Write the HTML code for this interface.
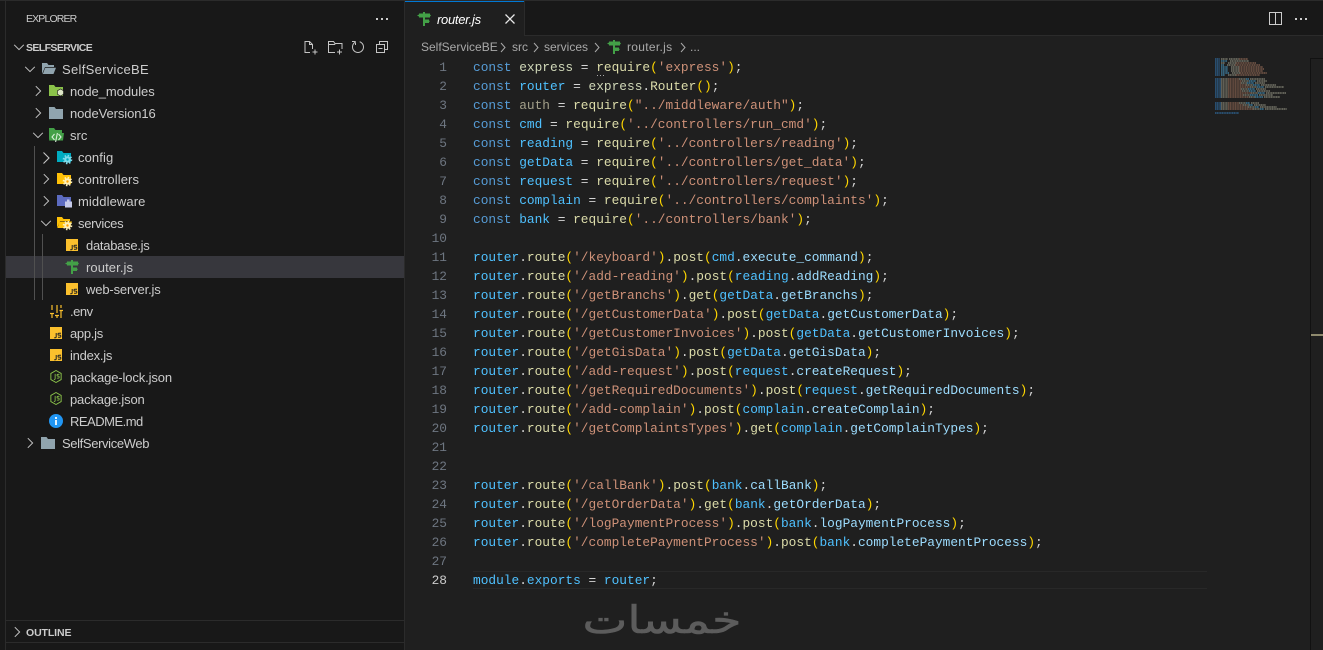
<!DOCTYPE html>
<html lang="en"><head><meta charset="utf-8"><title>router.js</title>
<style>
html,body{margin:0;padding:0;width:1323px;height:650px;overflow:hidden;background:#1f1f1f}
body{position:relative;font-family:"Liberation Sans",sans-serif;color:#ccc;font-size:13px}
.abs,.row,.sv{position:absolute}
#side{position:absolute;left:0;top:0;width:405px;height:650px;background:#181818}
.row{height:22px;line-height:22px;white-space:nowrap;left:0}
.row b{font-size:10.5px}
.row svg,.sv{position:absolute}
.code{position:absolute;left:473px;top:58px;font-family:"Liberation Mono",monospace;font-size:12.83px;line-height:19px;white-space:pre;color:#d4d4d4}
.nums{position:absolute;left:420px;width:27px;top:58px;font-family:"Liberation Mono",monospace;font-size:12.83px;line-height:19px;text-align:right;color:#6e7681}
.k{color:#569cd6}.v{color:#4fc1ff}.f{color:#dcdcaa}.s{color:#ce9178}.b{color:#ffd700}.a{color:#9cdcfe}.d{color:#a3a08a}.e{color:#d0d8b8}
.t{position:absolute;top:1px;line-height:22px}
.bc .t{top:0}
</style></head><body>
<svg width="0" height="0" style="position:absolute">
<defs>
<symbol id="chevR" viewBox="0 0 16 16"><path d="M5.5 2.5L11 8l-5.500 5.500" fill="none" stroke="#c5c5c5" stroke-width="1.100"/></symbol>
<symbol id="chevD" viewBox="0 0 16 16"><path d="M2.500 5.500L8 11l5.500-5.500" fill="none" stroke="#c5c5c5" stroke-width="1.100"/></symbol>
<symbol id="sign" viewBox="0 0 14 14"><path d="M6 0h2v1.500h5v1l1 1-1 1v1H8v2h4v1l1 .8-1 .7v1H8v3h2v1H4v-1h2V5.500H2v-1L0 3.500l2-1v-1h4z" fill="#43a047"/></symbol>
<symbol id="js" viewBox="0 0 12 12"><rect width="12" height="12" fill="#fbc02d"/><path d="M6.200 6v3.800q0 1-1 1H4.200M11 6.300H8.800q-.8 0-.8.900t.8.900h1.200q.8 0 .8 1.100t-.8 1H8" fill="none" stroke="#222" stroke-width="1"/></symbol>
<symbol id="fold" viewBox="0 0 16 14"><path d="M1 1h5.500l1.500 2h7v10H1z" fill="#90a4ae"/></symbol>
<symbol id="nodej" viewBox="0 0 14 16"><path d="M7 1l6 3.400v7.200L7 15l-6-3.400V4.400z" fill="none" stroke="#8bc34a" stroke-width="1.100"/><path d="M6 5v5.500q0 1-1.500 1M11 5.500H9.200q-1 0-1 1t1 1h.5q1 0 1 1.200t-1 1.200H8" fill="none" stroke="#8bc34a" stroke-width="1"/></symbol>
</defs></svg>

<div id="side">
<div class="abs" style="left:0;top:0;width:1323px;height:1px;background:#2b2b2b"></div>
<div class="abs" style="left:5px;top:0;width:1px;height:650px;background:#2b2b2b"></div>
<div class="abs" style="left:404px;top:0;width:1px;height:650px;background:#2b2b2b"></div>
<div class="abs" style="left:26px;top:8px;line-height:22px;font-size:10.5px;letter-spacing:-.85px;color:#ccc">EXPLORER</div>
<svg class="sv" style="left:375px;top:18px" width="14" height="3"><path d="M1 0h2v2H1zM6 0h2v2H6zM11 0h2v2h-2z" fill="#ccc"/></svg>

<div class="abs" style="left:6px;top:256px;width:398px;height:22px;background:#37373d"></div>
<div class="abs" style="left:34px;top:146px;width:1px;height:154px;background:#505050"></div>
<div class="abs" style="left:42px;top:234px;width:1px;height:66px;background:#505050"></div>

<div class="row" style="top:36px"><svg style="left:11px;top:4px" width="16" height="14"><use href="#chevD"/></svg><b class="t" style="left:26px;letter-spacing:-.6px">SELFSERVICE</b></div>
<svg class="sv" style="left:303px;top:40px" width="16" height="15" fill="none" stroke="#c5c5c5"><path d="M9.500 9V4.500L6.500 1.500H2v11h5M6.500 1.500v3h3M12 9.500v5M9.500 12h5"/></svg>
<svg class="sv" style="left:327px;top:40px" width="16" height="15" fill="none" stroke="#c5c5c5"><path d="M8 12.500H1.500v-11h5l1.500 2h7V9M1.500 4.500h6l1-1M12.500 9.500v5M10 12h5"/></svg>
<svg class="sv" style="left:350px;top:39px" width="16" height="16" viewBox="0 0 16 16"><path fill="#c5c5c5" d="M5.563 2.516C3.463 3.450 2 5.554 2 8c0 3.314 2.686 6 6 6s6-2.686 6-6c0-2.675-1.750-4.941-4.168-5.715l-.302.953C11.543 3.885 13 5.772 13 8c0 2.761-2.239 5-5 5s-5-2.239-5-5c0-1.689.837-3.182 2.120-4.088zM5 3H2V2h3.500l.5.500V6H5z"/></svg>
<svg class="sv" style="left:375px;top:40px" width="14" height="15" fill="none" stroke="#c5c5c5"><path d="M4.500 4V1.500h8v8H10M1.500 4.500h8v8h-8zM3.500 8.500h4"/></svg>

<div class="row" style="top:58px"><svg style="left:22px;top:4px" width="16" height="14"><use href="#chevD"/></svg>
<svg style="left:41px;top:4px" width="15" height="13"><path d="M1 1h5l1.500 2H13v2H4L1 12z" fill="#90a4ae"/><path d="M4.200 5.800H15L12.500 12H1.800z" fill="#90a4ae"/></svg>
<span class="t" style="left:62px;letter-spacing:.3px">SelfServiceBE</span></div>

<div class="row" style="top:80px"><svg style="left:30px;top:4px" width="16" height="14"><use href="#chevR"/></svg>
<svg style="left:49px;top:4px" width="15" height="14"><path d="M0 1h5l1.500 2H14v9H0z" fill="#8bc34a"/><path d="M11.500 5l3 1.700v3.600l-3 1.700-3-1.700V6.700z" fill="#dfe8c8" stroke="#181818" stroke-width=".6"/></svg>
<span class="t" style="left:70px;letter-spacing:-.05px">node_modules</span></div>

<div class="row" style="top:102px"><svg style="left:30px;top:4px" width="16" height="14"><use href="#chevR"/></svg>
<svg style="left:48px;top:4px" width="16" height="14"><use href="#fold"/></svg>
<span class="t" style="left:70px;letter-spacing:-.08px">nodeVersion16</span></div>

<div class="row" style="top:124px"><svg style="left:30px;top:4px" width="16" height="14"><use href="#chevD"/></svg>
<svg style="left:49px;top:4px" width="15" height="14"><path d="M0 0h5l1.500 2H13v3H3L0 12z" fill="#43a047"/><path d="M2 5h13l-1 7.500H0z" fill="#43a047"/><path d="M5.500 6L3 9l2.500 3M9.500 6l2.500 3-2.500 3M8.400 5l-1.800 9" fill="none" stroke="#d8f0d8" stroke-width="1.100"/></svg>
<span class="t" style="left:70px">src</span></div>

<div class="row" style="top:146px"><svg style="left:38px;top:4px" width="16" height="16" ><use href="#chevR"/></svg>
<svg style="left:57px;top:4px" width="16" height="15"><path d="M0 1h5l1.500 2H14v9H0z" fill="#00acc1"/><circle cx="10.500" cy="9.500" r="3.300" fill="#7fdcec"/><circle cx="10.500" cy="9.500" r="4" fill="none" stroke="#7fdcec" stroke-width="1.600" stroke-dasharray="1.500 1.640"/><circle cx="10.500" cy="9.500" r="1.200" fill="#00acc1"/></svg>
<span class="t" style="left:78px;letter-spacing:.1px">config</span></div>

<div class="row" style="top:168px"><svg style="left:38px;top:4px" width="16" height="14"><use href="#chevR"/></svg>
<svg style="left:57px;top:4px" width="16" height="15"><path d="M0 1h5l1.500 2H14v9H0z" fill="#ffc107"/><circle cx="10.500" cy="9.500" r="3.300" fill="#fff1b8"/><circle cx="10.500" cy="9.500" r="4" fill="none" stroke="#fff1b8" stroke-width="1.600" stroke-dasharray="1.500 1.640"/><circle cx="10.500" cy="9.500" r="1.200" fill="#ffa000"/></svg>
<span class="t" style="left:78px;letter-spacing:.1px">controllers</span></div>

<div class="row" style="top:190px"><svg style="left:38px;top:4px" width="16" height="14"><use href="#chevR"/></svg>
<svg style="left:57px;top:4px" width="16" height="15"><path d="M0 1h5l1.500 2H14v9H0z" fill="#5c6bc0"/><path d="M8 7.500h2V5.500h2.500v2H15v6H8z" fill="#c5cae9"/></svg>
<span class="t" style="left:78px;letter-spacing:.1px">middleware</span></div>

<div class="row" style="top:212px"><svg style="left:38px;top:4px" width="16" height="14"><use href="#chevD"/></svg>
<svg style="left:57px;top:4px" width="16" height="15"><path d="M0 1h5l1.500 2H13v2H3L0 12z" fill="#ffc107"/><path d="M2.500 5.500H15l-2 6.500H.5z" fill="#ffc107"/><circle cx="10.500" cy="9.500" r="3.300" fill="#fff1b8"/><circle cx="10.500" cy="9.500" r="4" fill="none" stroke="#fff1b8" stroke-width="1.600" stroke-dasharray="1.500 1.640"/><circle cx="10.500" cy="9.500" r="1.200" fill="#ffa000"/></svg>
<span class="t" style="left:78px;letter-spacing:-.3px">services</span></div>

<div class="row" style="top:234px"><svg style="left:66px;top:5px" width="12" height="12"><use href="#js"/></svg><span class="t" style="left:86px;letter-spacing:-.27px">database.js</span></div>
<div class="row" style="top:256px"><svg style="left:65px;top:4px" width="14" height="14"><use href="#sign"/></svg><span class="t" style="left:86px;letter-spacing:.1px">router.js</span></div>
<div class="row" style="top:278px"><svg style="left:66px;top:5px" width="12" height="12"><use href="#js"/></svg><span class="t" style="left:86px;letter-spacing:-.15px">web-server.js</span></div>

<div class="row" style="top:300px"><svg style="left:49px;top:4px" width="14" height="14" fill="none" stroke="#fbc02d" stroke-width="1.200"><path d="M3 1v5M1 9.500h4M3 9.500V14M8 1v8M6 11.500h4M8 11.500V14M12 1v3M10.500 6.500H14M12 6.500V14"/></svg><span class="t" style="left:70px;letter-spacing:-.5px">.env</span></div>
<div class="row" style="top:322px"><svg style="left:50px;top:5px" width="12" height="12"><use href="#js"/></svg><span class="t" style="left:70px;letter-spacing:-.3px">app.js</span></div>
<div class="row" style="top:344px"><svg style="left:50px;top:5px" width="12" height="12"><use href="#js"/></svg><span class="t" style="left:70px;letter-spacing:-.25px">index.js</span></div>
<div class="row" style="top:366px"><svg style="left:50px;top:3px" width="12" height="15" viewBox="0 0 14 16"><use href="#nodej"/></svg><span class="t" style="left:70px;letter-spacing:-.12px">package-lock.json</span></div>
<div class="row" style="top:388px"><svg style="left:50px;top:3px" width="12" height="15" viewBox="0 0 14 16"><use href="#nodej"/></svg><span class="t" style="left:70px;letter-spacing:-.17px">package.json</span></div>
<div class="row" style="top:410px"><svg style="left:49px;top:4px" width="14" height="14"><circle cx="7" cy="7" r="7" fill="#2196f3"/><path d="M6 3h2v2H6zM6 6h2v5H6z" fill="#e3f2fd"/></svg><span class="t" style="left:70px;letter-spacing:-.5px">README.md</span></div>
<div class="row" style="top:432px"><svg style="left:22px;top:4px" width="16" height="14"><use href="#chevR"/></svg>
<svg style="left:40px;top:4px" width="16" height="14"><use href="#fold"/></svg>
<span class="t" style="left:62px;letter-spacing:-.37px">SelfServiceWeb</span></div>

<div class="abs" style="left:6px;top:620px;width:398px;height:1px;background:#2b2b2b"></div>
<div class="abs" style="left:6px;top:642px;width:398px;height:1px;background:#2b2b2b"></div>
<div class="row" style="top:621px"><svg style="left:9px;top:4px" width="16" height="14"><use href="#chevR"/></svg><b class="t" style="left:26px;letter-spacing:-.1px">OUTLINE</b></div>
</div>

<!-- tabs -->
<div class="abs" style="left:405px;top:1px;width:918px;height:34px;background:#181818"></div>
<div class="abs" style="left:405px;top:35px;width:918px;height:1px;background:#2b2b2b"></div>
<div class="abs" style="left:405px;top:1px;width:119px;height:35px;background:#1f1f1f;border-right:1px solid #2b2b2b;box-sizing:content-box"></div>
<div class="abs" style="left:405px;top:1px;width:119px;height:1px;background:#0078d4"></div>
<svg class="sv" style="left:417px;top:12px" width="14" height="14"><use href="#sign"/></svg>
<div class="abs" style="left:437px;top:9px;line-height:22px;font-style:italic;font-size:13px;letter-spacing:-.3px;color:#fff">router.js</div>
<svg class="sv" style="left:504px;top:13px" width="12" height="12"><path d="M1.500 1.500l9 9M10.500 1.500l-9 9" stroke="#e8e8e8" stroke-width="1.300"/></svg>
<svg class="sv" style="left:1269px;top:12px" width="13" height="13" fill="none" stroke="#ccc"><path d="M.5 .5h12v12H.5zM6.500 .5v12"/></svg>
<svg class="sv" style="left:1294px;top:18px" width="14" height="3"><path d="M1 0h2v2H1zM6 0h2v2H6zM11 0h2v2h-2z" fill="#ccc"/></svg>

<!-- breadcrumb -->
<div class="abs bc" style="left:421px;top:36px;height:22px;line-height:22px;font-size:12px;color:#a9a9a9;white-space:nowrap">
<span class="t" style="left:0">SelfServiceBE</span>
<svg class="sv" style="left:78px;top:6px" width="10" height="11"><path d="M2 1l4 4.500L2 10" fill="none" stroke="#a9a9a9"/></svg>
<span class="t" style="left:91px">src</span>
<svg class="sv" style="left:111px;top:6px" width="10" height="11"><path d="M2 1l4 4.500L2 10" fill="none" stroke="#a9a9a9"/></svg>
<span class="t" style="left:123px">services</span>
<svg class="sv" style="left:172px;top:6px" width="10" height="11"><path d="M2 1l4 4.500L2 10" fill="none" stroke="#a9a9a9"/></svg>
<svg class="sv" style="left:186px;top:4px" width="14" height="14"><use href="#sign"/></svg>
<span class="t" style="left:206px;letter-spacing:.3px">router.js</span>
<svg class="sv" style="left:258px;top:6px" width="10" height="11"><path d="M2 1l4 4.500L2 10" fill="none" stroke="#a9a9a9"/></svg>
<span class="t" style="left:269px">...</span>
</div>

<!-- editor -->
<div class="abs" style="left:473px;top:571px;width:734px;height:16px;border-top:1px solid #282828;border-bottom:1px solid #282828"></div>
<div class="nums">1<br>2<br>3<br>4<br>5<br>6<br>7<br>8<br>9<br>10<br>11<br>12<br>13<br>14<br>15<br>16<br>17<br>18<br>19<br>20<br>21<br>22<br>23<br>24<br>25<br>26<br>27<br><span style="color:#ccc">28</span></div>
<div class="code"><span class="k">const</span> <span class="e">express</span> = <span class="f">require</span><span class="b">(</span><span class="s">'express'</span><span class="b">)</span>;
<span class="k">const</span> <span class="v">router</span> = <span class="e">express</span>.<span class="f">Router</span><span class="b">()</span>;
<span class="k">const</span> <span class="d">auth</span> = <span class="f">require</span><span class="b">(</span><span class="s">"../middleware/auth"</span><span class="b">)</span>;
<span class="k">const</span> <span class="v">cmd</span> = <span class="f">require</span><span class="b">(</span><span class="s">'../controllers/run_cmd'</span><span class="b">)</span>;
<span class="k">const</span> <span class="v">reading</span> = <span class="f">require</span><span class="b">(</span><span class="s">'../controllers/reading'</span><span class="b">)</span>;
<span class="k">const</span> <span class="v">getData</span> = <span class="f">require</span><span class="b">(</span><span class="s">'../controllers/get_data'</span><span class="b">)</span>;
<span class="k">const</span> <span class="v">request</span> = <span class="f">require</span><span class="b">(</span><span class="s">'../controllers/request'</span><span class="b">)</span>;
<span class="k">const</span> <span class="v">complain</span> = <span class="f">require</span><span class="b">(</span><span class="s">'../controllers/complaints'</span><span class="b">)</span>;
<span class="k">const</span> <span class="v">bank</span> = <span class="f">require</span><span class="b">(</span><span class="s">'../controllers/bank'</span><span class="b">)</span>;

<span class="v">router</span>.<span class="f">route</span><span class="b">(</span><span class="s">'/keyboard'</span><span class="b">)</span>.<span class="f">post</span><span class="b">(</span><span class="v">cmd</span>.<span class="a">execute_command</span><span class="b">)</span>;
<span class="v">router</span>.<span class="f">route</span><span class="b">(</span><span class="s">'/add-reading'</span><span class="b">)</span>.<span class="f">post</span><span class="b">(</span><span class="v">reading</span>.<span class="a">addReading</span><span class="b">)</span>;
<span class="v">router</span>.<span class="f">route</span><span class="b">(</span><span class="s">'/getBranchs'</span><span class="b">)</span>.<span class="f">get</span><span class="b">(</span><span class="v">getData</span>.<span class="a">getBranchs</span><span class="b">)</span>;
<span class="v">router</span>.<span class="f">route</span><span class="b">(</span><span class="s">'/getCustomerData'</span><span class="b">)</span>.<span class="f">post</span><span class="b">(</span><span class="v">getData</span>.<span class="a">getCustomerData</span><span class="b">)</span>;
<span class="v">router</span>.<span class="f">route</span><span class="b">(</span><span class="s">'/getCustomerInvoices'</span><span class="b">)</span>.<span class="f">post</span><span class="b">(</span><span class="v">getData</span>.<span class="a">getCustomerInvoices</span><span class="b">)</span>;
<span class="v">router</span>.<span class="f">route</span><span class="b">(</span><span class="s">'/getGisData'</span><span class="b">)</span>.<span class="f">post</span><span class="b">(</span><span class="v">getData</span>.<span class="a">getGisData</span><span class="b">)</span>;
<span class="v">router</span>.<span class="f">route</span><span class="b">(</span><span class="s">'/add-request'</span><span class="b">)</span>.<span class="f">post</span><span class="b">(</span><span class="v">request</span>.<span class="a">createRequest</span><span class="b">)</span>;
<span class="v">router</span>.<span class="f">route</span><span class="b">(</span><span class="s">'/getRequiredDocuments'</span><span class="b">)</span>.<span class="f">post</span><span class="b">(</span><span class="v">request</span>.<span class="a">getRequiredDocuments</span><span class="b">)</span>;
<span class="v">router</span>.<span class="f">route</span><span class="b">(</span><span class="s">'/add-complain'</span><span class="b">)</span>.<span class="f">post</span><span class="b">(</span><span class="v">complain</span>.<span class="a">createComplain</span><span class="b">)</span>;
<span class="v">router</span>.<span class="f">route</span><span class="b">(</span><span class="s">'/getComplaintsTypes'</span><span class="b">)</span>.<span class="f">get</span><span class="b">(</span><span class="v">complain</span>.<span class="a">getComplainTypes</span><span class="b">)</span>;


<span class="v">router</span>.<span class="f">route</span><span class="b">(</span><span class="s">'/callBank'</span><span class="b">)</span>.<span class="f">post</span><span class="b">(</span><span class="v">bank</span>.<span class="a">callBank</span><span class="b">)</span>;
<span class="v">router</span>.<span class="f">route</span><span class="b">(</span><span class="s">'/getOrderData'</span><span class="b">)</span>.<span class="f">get</span><span class="b">(</span><span class="v">bank</span>.<span class="a">getOrderData</span><span class="b">)</span>;
<span class="v">router</span>.<span class="f">route</span><span class="b">(</span><span class="s">'/logPaymentProcess'</span><span class="b">)</span>.<span class="f">post</span><span class="b">(</span><span class="v">bank</span>.<span class="a">logPaymentProcess</span><span class="b">)</span>;
<span class="v">router</span>.<span class="f">route</span><span class="b">(</span><span class="s">'/completePaymentProcess'</span><span class="b">)</span>.<span class="f">post</span><span class="b">(</span><span class="v">bank</span>.<span class="a">completePaymentProcess</span><span class="b">)</span>;

<span class="v">module</span>.<span class="v">exports</span> = <span class="v">router</span>;</div>
<svg class="sv" style="left:597px;top:75px" width="9" height="2"><path d="M0 0h1v1H0zM3 0h1v1H3zM6 0h1v1H6z" fill="#aaa"/></svg>

<!-- minimap -->
<svg class="sv" style="left:1215px;top:58px" width="76" height="58" viewBox="0 0 76 58" fill="none">
<g transform="scale(1 2)" stroke-width=".7" stroke-dasharray="1.300 .4">
<path stroke="#2d5f8a" d="M0 .5h5M0 1.500h5M0 2.500h5M0 3.500h5M0 4.500h5M0 5.500h5M0 6.500h5M0 7.500h5M0 8.500h5M0 10.500h6M0 11.500h6M0 12.500h6M0 13.500h6M0 14.500h6M0 15.500h6M0 16.500h6M0 17.500h6M0 18.500h6M0 19.500h6M0 22.500h6M0 23.500h6M0 24.500h6M0 25.500h6M0 27.500h24"/>
<path stroke="#3d7a9a" d="M6 1.500h6M6 3.500h3M6 4.500h7M6 5.500h7M6 6.500h7M6 7.500h8M6 8.500h4M31 10.500h3M34 11.500h7M32 12.500h7M38 13.500h7M42 14.500h7M33 15.500h7M34 16.500h7M43 17.500h7M35 18.500h8M40 19.500h8M31 22.500h4M34 23.500h4M40 24.500h4M45 25.500h4"/>
<path stroke="#77776a" d="M6 .5h7M6 2.500h4M14 .5h10M15 1.500h19M13 2.500h8M12 3.500h8M16 4.500h8M16 5.500h8M16 6.500h8M17 7.500h8M13 8.500h8M6 10.500h7M6 11.500h7M6 12.500h7M6 13.500h7M6 14.500h7M6 15.500h7M6 16.500h7M6 17.500h7M6 18.500h7M6 19.500h7M6 22.500h7M6 23.500h7M6 24.500h7M6 25.500h7M24 10.500h7M27 11.500h7M26 12.500h6M31 13.500h7M35 14.500h7M26 15.500h7M27 16.500h7M36 17.500h7M28 18.500h7M34 19.500h6M24 22.500h7M28 23.500h6M33 24.500h7M38 25.500h7M35 10.500h15M42 11.500h10M40 12.500h10M46 13.500h15M50 14.500h19M41 15.500h10M42 16.500h13M51 17.500h20M44 18.500h14M49 19.500h16M36 22.500h8M39 23.500h12M45 24.500h17M50 25.500h22"/>
<path stroke="#7a5a4a" d="M24 .5h9M21 2.500h20M20 3.500h25M24 4.500h24M24 5.500h25M24 6.500h24M25 7.500h27M21 8.500h24M13 10.500h11M13 11.500h14M13 12.500h13M13 13.500h18M13 14.500h22M13 15.500h13M13 16.500h14M13 17.500h23M13 18.500h15M13 19.500h21M13 22.500h11M13 23.500h15M13 24.500h20M13 25.500h25"/>
</g></svg>

<!-- scroll gutter -->
<div class="abs" style="left:1310px;top:58px;width:13px;height:1px;background:#111"></div>
<div class="abs" style="left:1310px;top:58px;width:1px;height:592px;background:#111"></div>
<div class="abs" style="left:1311px;top:334px;width:12px;height:2px;background:#8f8a6e"></div>

<!-- watermark -->
<svg class="sv" style="left:575px;top:595px" width="175" height="50"><text x="87" y="38" text-anchor="middle" direction="rtl" font-family="'DejaVu Sans',sans-serif" font-size="38" fill="#5c5c5c" stroke="#5c5c5c" stroke-width=".6" textLength="159" lengthAdjust="spacingAndGlyphs">خمسات</text></svg>
</body></html>
